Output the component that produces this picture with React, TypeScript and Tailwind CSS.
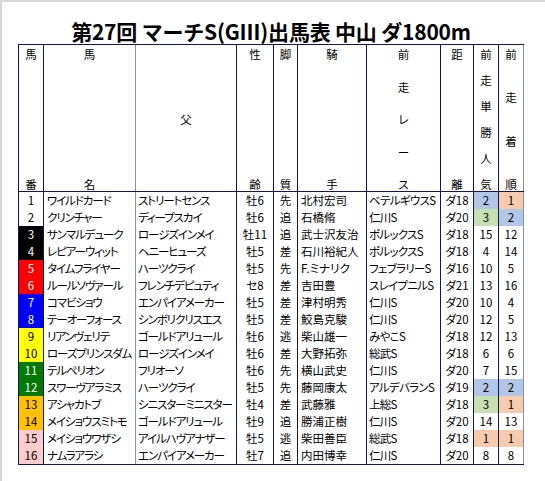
import React from 'react'

type Horse = {
  no: number
  name: string
  sire: string
  sexAge: string
  style: string
  jockey: string
  race: string
  dist: string
  pop: number
  finish: number
}

const horses: Horse[] = [
  { no: 1, name: 'ワイルドカード', sire: 'ストリートセンス', sexAge: '牡6', style: '先', jockey: '北村宏司', race: 'ベテルギウスS', dist: 'ダ18', pop: 2, finish: 1 },
  { no: 2, name: 'クリンチャー', sire: 'ディープスカイ', sexAge: '牡6', style: '追', jockey: '石橋脩', race: '仁川S', dist: 'ダ20', pop: 3, finish: 2 },
  { no: 3, name: 'サンマルデューク', sire: 'ロージズインメイ', sexAge: '牡11', style: '追', jockey: '武士沢友治', race: 'ポルックスS', dist: 'ダ18', pop: 15, finish: 12 },
  { no: 4, name: 'レピアーウィット', sire: 'ヘニーヒューズ', sexAge: '牡5', style: '差', jockey: '石川裕紀人', race: 'ポルックスS', dist: 'ダ18', pop: 4, finish: 14 },
  { no: 5, name: 'タイムフライヤー', sire: 'ハーツクライ', sexAge: '牡5', style: '先', jockey: 'F.ミナリク', race: 'フェブラリーS', dist: 'ダ16', pop: 10, finish: 5 },
  { no: 6, name: 'ルールソヴァール', sire: 'フレンチデピュティ', sexAge: 'セ8', style: '差', jockey: '吉田豊', race: 'スレイプニルS', dist: 'ダ21', pop: 13, finish: 16 },
  { no: 7, name: 'コマビショウ', sire: 'エンパイアメーカー', sexAge: '牡5', style: '差', jockey: '津村明秀', race: '仁川S', dist: 'ダ20', pop: 10, finish: 4 },
  { no: 8, name: 'テーオーフォース', sire: 'シンボリクリスエス', sexAge: '牡5', style: '差', jockey: '鮫島克駿', race: '仁川S', dist: 'ダ20', pop: 12, finish: 5 },
  { no: 9, name: 'リアンヴェリテ', sire: 'ゴールドアリュール', sexAge: '牡6', style: '逃', jockey: '柴山雄一', race: 'みやこS', dist: 'ダ18', pop: 12, finish: 13 },
  { no: 10, name: 'ローズプリンスダム', sire: 'ロージズインメイ', sexAge: '牡6', style: '差', jockey: '大野拓弥', race: '総武S', dist: 'ダ18', pop: 6, finish: 6 },
  { no: 11, name: 'テルペリオン', sire: 'フリオーソ', sexAge: '牡6', style: '先', jockey: '横山武史', race: '仁川S', dist: 'ダ20', pop: 7, finish: 15 },
  { no: 12, name: 'スワーヴアラミス', sire: 'ハーツクライ', sexAge: '牡5', style: '先', jockey: '藤岡康太', race: 'アルデバランS', dist: 'ダ19', pop: 2, finish: 2 },
  { no: 13, name: 'アシャカトブ', sire: 'シニスターミニスター', sexAge: '牡4', style: '差', jockey: '武藤雅', race: '上総S', dist: 'ダ18', pop: 3, finish: 1 },
  { no: 14, name: 'メイショウスミトモ', sire: 'ゴールドアリュール', sexAge: '牡9', style: '追', jockey: '勝浦正樹', race: '仁川S', dist: 'ダ20', pop: 14, finish: 13 },
  { no: 15, name: 'メイショウワザシ', sire: 'アイルハヴアナザー', sexAge: '牡5', style: '逃', jockey: '柴田善臣', race: '総武S', dist: 'ダ18', pop: 1, finish: 1 },
  { no: 16, name: 'ナムラアラシ', sire: 'エンパイアメーカー', sexAge: '牡7', style: '追', jockey: '内田博幸', race: '仁川S', dist: 'ダ20', pop: 8, finish: 8 },
]

// 枠の色 (馬番 2頭ずつ)
const frameColors = [
  'bg-white text-black',
  'bg-black text-white',
  'bg-[#ff0000] text-white',
  'bg-[#0000ff] text-white',
  'bg-[#ffff00] text-black',
  'bg-[#007a00] text-white',
  'bg-[#ffc000] text-black',
  'bg-[#ffcccc] text-black',
]

function rankBg(n: number) {
  if (n === 1) return 'bg-[#f8cbad]'
  if (n === 2) return 'bg-[#b4c6e7]'
  if (n === 3) return 'bg-[#c6e0b4]'
  return ''
}

const line = 'border-r border-[#10185a]'
const soft = 'border-r border-[#8090c0]'

const cols = [
  { w: 'w-[25px]', b: line, top: '馬', bottom: '番' },
  { w: 'w-[92px]', b: soft, top: '馬', bottom: '名' },
  { w: 'w-[101px]', b: line, top: '父' },
  { w: 'w-[37px]', b: line, top: '性', bottom: '齢' },
  { w: 'w-[24px]', b: line, top: '脚', bottom: '質' },
  { w: 'w-[69px]', b: line, top: '騎', bottom: '手' },
  { w: 'w-[74px]', b: line, chars: ['前', '走', 'レ', 'ー', 'ス'] },
  { w: 'w-[33px]', b: line, top: '距', bottom: '離' },
  { w: 'w-[25px]', b: line, chars: ['前', '走', '単', '勝', '人', '気'] },
  { w: 'w-[25px]', b: soft, chars: ['前', '走', '着', '順'] },
]

export default function App() {
  return (
    <div
      className="w-[545px] h-[481px] bg-white border-t-2 border-l-2 border-[#d9d9d9] text-black"
      style={{ fontFamily: '"Noto Sans CJK JP", "Noto Sans", sans-serif' }}
    >
      {/* タイトル */}
      <div className="h-[42px] w-[506px] ml-[16px] pt-[17px] text-center">
        <h1 className="text-[21px] font-bold leading-[24px] tracking-[-0.2px]">
          第27回 マーチS(GⅢ)出馬表 中山 ダ1800m
        </h1>
      </div>

      <div className="ml-[16px] w-[506px] border-l border-t border-[#10185a] text-[11.5px] [font-feature-settings:'palt']">
        {/* ヘッダー */}
        <div className="flex h-[147px] border-b border-[#10185a]">
          {cols.map((c, i) => (
            <div
              key={i}
              className={`${c.w} ${c.b} flex flex-col items-center ${c.bottom || c.chars ? 'justify-between' : 'justify-center'} pt-[2px] pb-0 leading-[14px]`}
            >
              {c.chars ? (
                c.chars.map((ch, j) => <span key={j}>{ch}</span>)
              ) : (
                <>
                  <span>{c.top}</span>
                  {c.bottom && <span>{c.bottom}</span>}
                </>
              )}
            </div>
          ))}
        </div>

        {/* 出走馬 */}
        <div className="border-b border-[#10185a]">
          {horses.map((h) => (
            <div key={h.no} className="flex h-[17px] leading-[17px] whitespace-nowrap">
              <div className={`w-[25px] ${line} text-center ${frameColors[Math.floor((h.no - 1) / 2)]}`}>{h.no}</div>
              <div className={`w-[92px] ${soft} pl-[3px] overflow-hidden tracking-[-1.1px]`}>{h.name}</div>
              <div className={`w-[101px] ${line} pl-[2px] overflow-hidden tracking-[-1.1px]`}>{h.sire}</div>
              <div className={`w-[37px] ${line} text-center`}>{h.sexAge}</div>
              <div className={`w-[24px] ${line} text-center`}>{h.style}</div>
              <div className={`w-[69px] ${line} pl-[3px] overflow-hidden`}>{h.jockey}</div>
              <div className={`w-[74px] ${line} pl-[2px] overflow-hidden tracking-[-0.7px]`}>{h.race}</div>
              <div className={`w-[33px] ${line} text-center`}>{h.dist}</div>
              <div className={`w-[25px] ${line} text-center ${rankBg(h.pop)}`}>{h.pop}</div>
              <div className={`w-[25px] ${soft} text-center ${rankBg(h.finish)}`}>{h.finish}</div>
            </div>
          ))}
        </div>
      </div>
    </div>
  )
}
